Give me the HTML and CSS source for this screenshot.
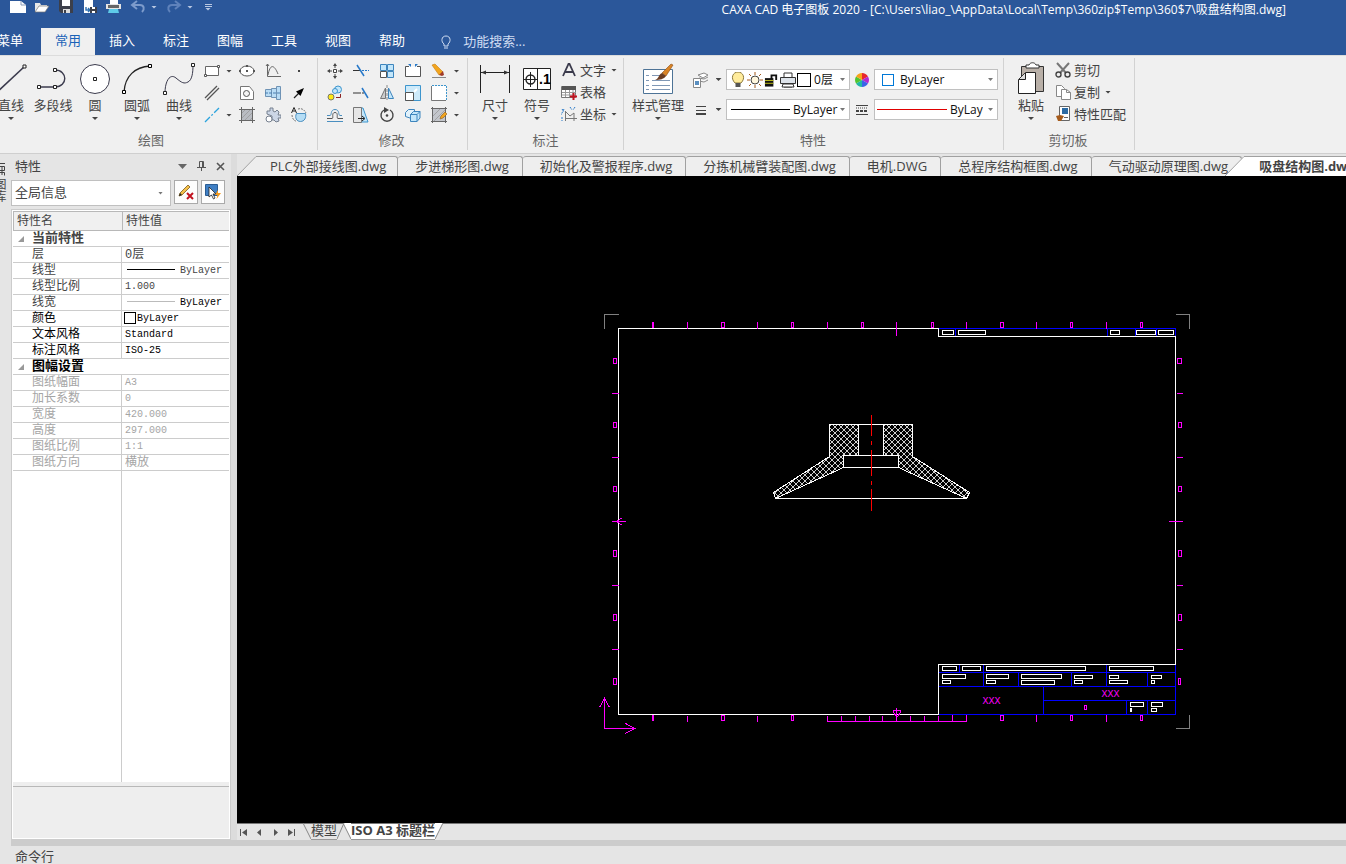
FILE: index.html
```html
<!DOCTYPE html>
<html lang="zh-CN">
<head>
  <meta charset="UTF-8" />
  <title>CAXA CAD 电子图板 2020</title>
  <meta name="viewport" content="width=device-width, initial-scale=1.0" />
  <link rel="stylesheet" href="styles.css">
</head>
<body>

  <header class="titlebar">
    <div class="title-row">
      <div class="quick">
        <button aria-label="新建"><svg class="ico" viewBox="0 0 16 16"><path d="M0 2h11l5 4v8H0z" fill="#fff"/><path d="M11 2v4h5" fill="none" stroke="#8a9bb8"/></svg></button>
        <button aria-label="打开"><svg class="ico" viewBox="0 0 16 16"><path d="M1 13V4h5l1 2h6v2" fill="#e8e8e8"/><path d="M1 13l4-6h10l-4 6z" fill="#fff" stroke="#777" stroke-width=".7"/></svg></button>
        <button aria-label="保存"><svg class="ico" viewBox="0 0 16 16"><path d="M1 1h14v13H3l-2-2z" fill="#3c3f4a"/><path d="M4 1h8v6H4z" fill="#fff"/><path d="M5 10h7v4H5z" fill="#ddd"/><path d="M6 11h2v3H6z" fill="#3c3f4a"/></svg></button>
        <button aria-label="另存为"><svg class="ico" viewBox="0 0 16 16"><path d="M2 0h9v14H2z" fill="#fff"/><path d="M4 8v3h4M6 9l2 2-2 2" fill="none" stroke="#2e6fb0" stroke-width="1.4"/><path d="M8 8h7v6H8z" fill="#3c3f4a"/><path d="M10 8h3v2h-3zM10 12h3v2h-3z" fill="#fff"/></svg></button>
        <button aria-label="打印"><svg class="ico" viewBox="0 0 16 16"><path d="M4 0h8v5H4z" fill="#fff"/><path d="M0 5h15v5H0z" fill="#e4e4e4"/><path d="M2 6h11v3H2z" fill="#666"/><path d="M3 10h9l1 4H2z" fill="#5fcbe8"/></svg></button>
        <button aria-label="撤销"><svg class="ico" viewBox="0 0 16 16"><path d="M7 2L2 6l5 4M3 6h7c4 0 5 4 2 7" fill="none" stroke="#7d9bcb" stroke-width="2"/></svg></button>
        <button class="mini" aria-label="撤销列表"><span class="arrow light"></span></button>
        <button aria-label="重做"><svg class="ico" viewBox="0 0 16 16"><path d="M9 2l5 4-5 4M13 6H6c-4 0-5 4-2 7" fill="none" stroke="#5f82bb" stroke-width="2"/></svg></button>
        <button class="mini" aria-label="重做列表"><span class="arrow light"></span></button>
        <button class="mini more" aria-label="自定义"><span class="bar"></span><span class="bar"></span><span class="arrow light"></span></button>
      </div>
      <h1>CAXA CAD 电子图板 2020 - [C:\Users\liao_\AppData\Local\Temp\360zip$Temp\360$7\吸盘结构图.dwg]</h1>
    </div>
    <nav class="menu">
      <a class="menu-main" href="#">菜单</a>
      <a class="active" href="#">常用</a>
      <a href="#">插入</a>
      <a href="#">标注</a>
      <a href="#">图幅</a>
      <a href="#">工具</a>
      <a href="#">视图</a>
      <a href="#">帮助</a>
      <label class="search">
        <svg width="12" height="14" viewBox="0 0 12 14"><path d="M4 9C1 7 1 1 6 1s5 6 2 8v2H4zM4 13h4" fill="none" stroke="#cfdcf2"/></svg>
        <input type="text" placeholder="功能搜索..." aria-label="功能搜索">
      </label>
    </nav>
  </header>

  <div class="ribbon">
    <section class="group draw">
      <div class="group-body">
        <button class="big"><svg viewBox="0 0 36 36"><path d="M3 32L31 6" stroke="#3b3b4d" stroke-width="1.6"/><path d="M30 4h3v3h-3z" fill="#fff" stroke="#222"/></svg><span>直线</span><span class="arrow"></span></button>
        <button class="big"><svg viewBox="0 0 36 36" fill="none" stroke="#3b3b4d"><path d="M4 26h16c13 0 13-17 0-17" stroke-width="1.4"/><path d="M2.500 24.500h3v3h-3zM18.500 24.500h3v3h-3zM18.500 7.500h3v3h-3z" fill="#fff" stroke="#222"/></svg><span>多段线</span></button>
        <button class="big"><svg viewBox="0 0 36 36"><circle cx="18" cy="18" r="14.500" fill="#fff" stroke="#3b3b4d"/><path d="M16.500 16.500h3v3h-3z" fill="#fff" stroke="#222"/></svg><span>圆</span><span class="arrow"></span></button>
        <button class="big"><svg viewBox="0 0 36 36"><path d="M5 31C6 15 16 6 31 5" fill="none" stroke="#222" stroke-width="1.300"/><path d="M3.500 29.500h3v3h-3zM29.500 3.500h3v3h-3z" fill="#fff" stroke="#000"/></svg><span>圆弧</span><span class="arrow"></span></button>
        <button class="big"><svg viewBox="0 0 36 36"><path d="M4 32C4 20 9 12 15 17s8 6 12 4 5-9 5-17" fill="none" stroke="#3b3b4d"/><path d="M2.500 30.500h3v3h-3zM30.500 2.500h3v3h-3z" fill="#fff" stroke="#222"/></svg><span>曲线</span><span class="arrow"></span></button>
        <div class="small-grid draw-grid">
          <button aria-label="矩形"><svg class="ico" viewBox="0 0 16 16"><path d="M1.500 3.500h13v9h-13z" fill="#fff" stroke="#666"/><path d="M.5 11.500h2v2h-2zM13.500 2.500h2v2h-2z" fill="#fff" stroke="#555"/></svg></button>
          <button aria-label="矩形选项"><span class="arrow"></span></button>
          <button aria-label="椭圆"><svg class="ico" viewBox="0 0 16 16"><ellipse cx="8" cy="8" rx="7" ry="5" fill="#fff" stroke="#555"/><path d="M7 2h2v2H7zM0 7h2v2H0zM14 7h2v2h-2zM7 7h2v2H7z" fill="#555"/></svg></button>
          <button aria-label="公式曲线"><svg class="ico" viewBox="0 0 16 16"><path d="M2.500 1v12.500H16M3 12C5 1 9 1 13 11" fill="none" stroke="#666"/><path d="M1 3l1.500-2L4 3" fill="none" stroke="#666"/></svg></button>
          <button aria-label="点"><svg class="ico" viewBox="0 0 16 16"><path d="M7 7h2v2H7z" fill="#444"/></svg></button>

          <button aria-label="平行线"><svg class="ico" viewBox="0 0 16 16"><path d="M1 13L13 1M3 15L15 3" stroke="#555" stroke-width="1.300"/></svg></button>
          <span></span>
          <button aria-label="局部放大"><svg class="ico" viewBox="0 0 16 16"><path d="M1.500 1.500h9l4 5v8h-13z" fill="#fff" stroke="#777"/><circle cx="7.500" cy="8.500" r="3" fill="#f4f4f4" stroke="#555"/></svg></button>
          <button aria-label="孔轴"><svg class="ico" viewBox="0 0 16 16"><path d="M.5 4.500h6v7h-6zM6.500 3.500h5v9h-5zM11.500 1.500h4v13h-4z" fill="#b9dcf5" stroke="#6f93b5"/><path d="M0 8h16" stroke="#4a7fb0" stroke-dasharray="3 1"/></svg></button>
          <button aria-label="箭头"><svg class="ico" viewBox="0 0 16 16"><path d="M3 13l6-6" stroke="#222" stroke-width="1.200"/><path d="M13 3l-8 3.500 4.500 4.500z" fill="#000"/></svg></button>

          <button aria-label="中心线"><svg class="ico" viewBox="0 0 16 16"><path d="M1 15L15 1" stroke="#2ba3dd" stroke-width="1.300" stroke-dasharray="7 2 2 2"/></svg></button>
          <button aria-label="中心线选项"><span class="arrow"></span></button>
          <button aria-label="剖面线"><svg class="ico" viewBox="0 0 16 16"><path d="M2 2h12v12H2z" fill="#b9bcc2"/><path d="M2 7l5-5M2 12L12 2M5 14l9-9M10 14l4-4" stroke="#999" stroke-width=".8"/><path d="M2.500 0v16M13.500 0v16M0 2.500h16M0 13.500h16" stroke="#666"/></svg></button>
          <button aria-label="齿形"><svg class="ico" viewBox="0 0 16 16"><path d="M5 1h3v3l2 1 2-2 2 2-1 3h3v3h-3l1 3-3 1-2-2H7V9L2 7V4h3z" fill="#ccd6e6" stroke="#76808f"/><circle cx="4" cy="12" r="3" fill="#fff" stroke="#76808f"/></svg></button>
          <button aria-label="圆弧拟合"><svg class="ico" viewBox="0 0 16 16"><path d="M5.500 6.500h9c1 4-1 8-5 8s-6-4-4-8z" fill="#b5ddf5" stroke="#4a8fc0"/><path d="M7 2c3-1 6 0 8 4M1 8c0 3 2 6 4 6" fill="none" stroke="#777" stroke-dasharray="2 1"/><path d="M.5 6L3 .500 5.500 6M1.500 4h3" fill="none" stroke="#222"/></svg></button>
        </div>
      </div>
      <h2>绘图</h2>
    </section>

    <section class="group modify">
      <div class="group-body">
        <div class="small-grid modify-grid">
          <button aria-label="平移"><svg class="ico" viewBox="0 0 16 16"><path d="M6.500 6.500h3v3h-3z" fill="#fff" stroke="#444"/><path d="M8 2v3M8 11v3M2 8h3M11 8h3" stroke="#444"/><path d="M6 3l2-3 2 3zM6 13l2 3 2-3zM3 6L0 8l3 2zM13 6l3 2-3 2z" fill="#444"/></svg></button>
          <button aria-label="裁剪"><svg class="ico" viewBox="0 0 16 16"><path d="M0 7.500h7" stroke="#333"/><path d="M9 7.500h7" stroke="#2778c8" stroke-dasharray="2 1"/><path d="M4 2l7 11" stroke="#2778c8" stroke-width="1.500"/></svg></button>
          <button aria-label="阵列"><svg class="ico" viewBox="0 0 16 16"><path d="M1.500 1.500h6v6h-6zM8.500 1.500h6v6h-6zM8.500 8.500h6v6h-6z" fill="#c3e6fa" stroke="#3d85bd"/><path d="M1.500 8.500h6v6h-6z" fill="#fff" stroke="#555"/></svg></button>
          <button aria-label="打断"><svg class="ico" viewBox="0 0 16 16"><path d="M4 3.500H.500v10h15v-10H12" fill="#fff" stroke="#555"/><path d="M3 1h3v3zM10 4V1h3z" fill="#2778c8"/></svg></button>
          <button aria-label="删除"><svg class="ico" viewBox="0 0 16 16"><path d="M1 2l3-1 8 8-4 3z" fill="#f2a51e" stroke="#c87d10" stroke-width=".6"/><path d="M8 12l4-4 1 4-2 1z" fill="#a03a28"/><path d="M1 14.500h14" stroke="#888"/></svg></button>
          <button aria-label="删除选项"><span class="arrow"></span></button>

          <button aria-label="平移复制"><svg class="ico" viewBox="0 0 16 16"><circle cx="11" cy="4.500" r="3.500" fill="#c3e6fa" stroke="#3d95cd"/><circle cx="8" cy="6" r="2.500" fill="#c3e6fa" stroke="#3d95cd"/><circle cx="4" cy="12" r="3" fill="#ffe914" stroke="#776"/><path d="M9 12.500h4.500V9" fill="none" stroke="#8a2323"/></svg></button>
          <button aria-label="延伸"><svg class="ico" viewBox="0 0 16 16"><path d="M0 8h6" stroke="#333"/><path d="M6 8h5" stroke="#333" stroke-dasharray="2 1"/><path d="M9 3l6 10" stroke="#2778c8" stroke-width="1.500"/></svg></button>
          <button aria-label="镜像"><svg class="ico" viewBox="0 0 16 16"><path d="M6.500 3v10.500h-5z" fill="#ccc" stroke="#777"/><path d="M9.500 3v10.500h5z" fill="#c3e6fa" stroke="#3d85bd"/><path d="M8 0v16" stroke="#888" stroke-dasharray="3 1"/></svg></button>
          <button aria-label="缩放"><svg class="ico" viewBox="0 0 16 16"><path d="M.5.500h15v15H.500z" fill="#cdeafa" stroke="#3d95cd"/><path d="M.5 7.500h8v8h-8z" fill="#fff" stroke="#555"/><path d="M9 7l3-3" stroke="#fff" stroke-width="2"/></svg></button>
          <button aria-label="拉伸"><svg class="ico" viewBox="0 0 16 16"><path d="M1 1h14v14H1z" fill="#fff"/><path d="M.5 1v14.500H15" fill="none" stroke="#777"/><path d="M1 .500h14.500V15" fill="none" stroke="#3d95cd" stroke-dasharray="2 1"/></svg></button>
          <button aria-label="拉伸选项"><span class="arrow"></span></button>

          <button aria-label="等距线"><svg class="ico" viewBox="0 0 16 16"><path d="M0 11.500h5c2 0-1-6 3-6s1 6 3 6h5" fill="none" stroke="#555"/><path d="M0 14.500h16M0 8.500h3c2 0 0-6 5-6s3 6 5 6h2" fill="none" stroke="#4a8fc0"/></svg></button>
          <button aria-label="倒角"><svg class="ico" viewBox="0 0 16 16"><path d="M10 1l5 14H6V1z" fill="#c3e6fa" stroke="#3d95cd"/><path d="M.5.500h8v15h-8z" fill="#e6e6e6" stroke="#777"/><path d="M5 11.500h6M9 9l3 2.500L9 14" fill="none" stroke="#222"/></svg></button>
          <button aria-label="旋转"><svg class="ico" viewBox="0 0 16 16"><path d="M5 3a6 6 0 1 0 6 0" fill="none" stroke="#444" stroke-width="1.400"/><path d="M5 0l5 3-5 3z" fill="#444"/><circle cx="8" cy="8.500" r="1.300" fill="#444"/></svg></button>
          <button aria-label="阵列块"><svg class="ico" viewBox="0 0 16 16"><path d="M.5 5.500l3-3h6v6l-3 3-6-2z" fill="#e2f2fb" stroke="#3d85bd"/><path d="M5.500 7.500l3-3h6.500v6.500l-3 3.500H5.500z" fill="#c3e6fa" stroke="#3d85bd"/><path d="M5.500 7.500H12v7M12 7.500l3-3" fill="none" stroke="#3d85bd"/></svg></button>
          <button aria-label="编辑填充"><svg class="ico" viewBox="0 0 16 16"><path d="M2 2h12v12H2z" fill="#c3c6cc"/><path d="M2 9l7-7M3 14L14 3" stroke="#999" stroke-width=".8"/><path d="M1.500 0v16M14.500 0v16M0 1.500h16M0 14.500h16" stroke="#666"/><path d="M9 12l1-3 4-4 2 2-4 4z" fill="#f2a51e" stroke="#8d5a1a" stroke-width=".6"/></svg></button>
          <button aria-label="编辑选项"><span class="arrow"></span></button>
        </div>
      </div>
      <h2>修改</h2>
    </section>

    <section class="group annotate">
      <div class="group-body">
        <button class="big"><svg viewBox="0 0 36 36"><path d="M3.500 4v28M32.500 4v28M4 11.500h28" stroke="#222"/><path d="M4 11.500l5-2v4zM32 11.500l-5-2v4z" fill="#333"/></svg><span>尺寸</span><span class="arrow"></span></button>
        <button class="big"><svg viewBox="0 0 36 36"><path d="M4.500 7.500h27v21h-27z" fill="#fff" stroke="#222"/><path d="M18.500 8v21M5 18.500h13M11.500 11v15" stroke="#222"/><circle cx="11.500" cy="18.500" r="4.500" fill="none" stroke="#222" stroke-width="1.400"/><text x="20" y="23" class="sym">.1</text></svg><span>符号</span><span class="arrow"></span></button>
        <div class="lines">
          <button><svg class="ico" viewBox="0 0 16 16"><path d="M2 14L7.500 2h1L14 14M4 10h8" fill="none" stroke="#3b3b4d" stroke-width="1.800"/></svg>文字<span class="arrow"></span></button>
          <button><svg class="ico" viewBox="0 0 16 16"><path d="M.5 2.500h14v11H.500z" fill="#fff" stroke="#777"/><path d="M1 2h14v4H1z" fill="#555"/><path d="M1 8.500h14M1 11h14M4.500 6v7M8.500 6v7M12 6v7" stroke="#999"/><path d="M12.500 9v7M9 12.500h7" stroke="#c1121f" stroke-width="2"/></svg>表格</button>
          <button><svg class="ico" viewBox="0 0 16 16"><path d="M4.500 5v10M5 12.500h11M5 6l4 4 4-3M13 7v8" fill="none" stroke="#777"/><path d="M1 3l2 3M3 3L0 9M9 1l2 3M14 1l-2 3M1 11v4" stroke="#2778c8" stroke-dasharray="2 1"/></svg>坐标<span class="arrow"></span></button>
        </div>
      </div>
      <h2>标注</h2>
    </section>

    <section class="group props">
      <div class="group-body">
        <button class="big wide"><svg viewBox="0 0 36 36"><path d="M3.500 8.500h29v24h-29z" fill="#fff" stroke="#4d7396"/><path d="M6 14.500h3M6 19.500h3M6 24.500h3M6 28.500h3M12 14.500h8M12 19.500h18M12 24.500h18M12 28.500h18" stroke="#7f97b5"/><path d="M22 12l9-9 2 1-7 11z" fill="#d98425" stroke="#8a4a10" stroke-width=".6"/><path d="M22 12l4 3c-2 3-6 4-11 4 4-1 3-5 7-7z" fill="#6b3d22"/></svg><span>样式管理</span><span class="arrow"></span></button>
        <div class="prop-grid">
          <button class="pick" aria-label="图层"><svg class="ico" viewBox="0 0 16 16"><path d="M5 3l6-2 4 2-5 3zM6 6l5 1 4-2M6 9l5 1 4-2" fill="#fff" stroke="#888"/><path d="M.5 6.500h7v9h-7z" fill="#fff" stroke="#888"/><path d="M2 9h4v4H2z" fill="#5a8fc0"/></svg><span class="arrow"></span></button>
          <div class="combo">
            <svg class="ico" viewBox="0 0 16 16"><path d="M5 11C0 6 3 0 8 0s8 6 3 11z" fill="#ffec9c" stroke="#8d7a3c"/><path d="M5.500 11h5v4h-5z" fill="#555"/></svg>
            <svg class="ico" viewBox="0 0 16 16"><circle cx="8" cy="8" r="4" fill="#fff7de" stroke="#444"/><path d="M8 0v3M8 13v3M0 8h3M13 8h3M2 2l2 2M12 12l2 2M2 14l2-2M12 4l2-2" stroke="#a55b1c"/></svg>
            <svg class="ico tight" viewBox="0 0 16 16"><path d="M1 6h9v9H1z" fill="#111"/><path d="M1 8.500h9M1 11.500h9" stroke="#c9c71e"/><path d="M8 7V3h5v5" fill="none" stroke="#111" stroke-width="2"/></svg>
            <svg class="ico" viewBox="0 0 16 16"><path d="M4 1h8v5H4zM4 10h8v5H4z" fill="#fff" stroke="#333"/><path d="M.5 5.500h15v6H.500z" fill="#dde3ea" stroke="#333"/><path d="M3 12l-1 3h12l-1-3z" fill="#fff" stroke="#333"/></svg>
            <span class="swatch black"></span>
            <select aria-label="图层选择"><option>0层</option></select>
          </div>
          <svg class="ico" viewBox="0 0 16 16"><path d="M8 8V1a7 7 0 0 1 6 3.500z" fill="#e8262c"/><path d="M8 8l6-3.500a7 7 0 0 1 0 7z" fill="#b12bd0"/><path d="M8 8l6 3.500A7 7 0 0 1 8 15z" fill="#3a64e8"/><path d="M8 8v7a7 7 0 0 1-6-3.500z" fill="#21b8a5"/><path d="M8 8l-6 3.500a7 7 0 0 1 0-7z" fill="#52c431"/><path d="M8 8L2 4.500A7 7 0 0 1 8 1z" fill="#f7a21b"/></svg>
          <div class="combo">
            <span class="swatch blue"></span>
            <select aria-label="颜色"><option>ByLayer</option></select>
          </div>

          <button class="pick" aria-label="线宽"><svg class="ico" viewBox="0 0 16 16"><path d="M3 4.500h10M3 8.500h10" stroke="#444"/><path d="M3 12h10" stroke="#444" stroke-width="2"/></svg><span class="arrow"></span></button>
          <div class="combo">
            <span class="sample"></span>
            <select aria-label="线型"><option>ByLayer</option></select>
          </div>
          <svg class="ico" viewBox="0 0 16 16"><path d="M2 3.500h12M2 12.500h12" stroke="#444"/><path d="M2 6h12" stroke="#444" stroke-dasharray="1 1"/><path d="M2 9h12" stroke="#444" stroke-width="2" stroke-dasharray="3 1"/></svg>
          <div class="combo">
            <span class="sample red"></span>
            <select class="cut" aria-label="线宽选择"><option>ByLayer</option></select>
          </div>
        </div>
      </div>
      <h2>特性</h2>
    </section>

    <section class="group clip">
      <div class="group-body">
        <button class="big"><svg viewBox="0 0 36 36"><path d="M8.500 5.500h22v25h-22z" fill="#b9b0a8" stroke="#333"/><path d="M13 7V4h3c1-3 6-3 7 0h3v3z" fill="#fff" stroke="#333"/><path d="M12.500 11.500h10v21h-17v-14z" fill="#fff" stroke="#222"/><path d="M12.500 12v6.500H6" fill="#ddd" stroke="#222"/></svg><span>粘贴</span><span class="arrow"></span></button>
        <div class="lines">
          <button><svg class="ico" viewBox="0 0 16 16"><path d="M2 1l9 10M14 1L5 11" stroke="#777" stroke-width="2"/><circle cx="3.500" cy="12.500" r="2.500" fill="none" stroke="#444" stroke-width="1.400"/><circle cx="12.500" cy="12.500" r="2.500" fill="none" stroke="#444" stroke-width="1.400"/></svg>剪切</button>
          <button><svg class="ico" viewBox="0 0 16 16"><path d="M1.500 1.500h5l3 3v8h-8z" fill="#fff" stroke="#888"/><path d="M6.500 5.500h5l4 3v7h-9z" fill="#fff" stroke="#888"/><path d="M11.500 5.500v3h4" fill="none" stroke="#888"/></svg>复制<span class="arrow"></span></button>
          <button><svg class="ico" viewBox="0 0 16 16"><path d="M4.500.500h10v14h-10z" fill="#fff" stroke="#666"/><path d="M7 2h6v6H7z" fill="#2d6ca5"/><path d="M9 11.500h4" stroke="#666"/><path d="M1 10l4-1 4 1-3 5H3z" fill="#a55b1c"/></svg>特性匹配</button>
        </div>
      </div>
      <h2>剪切板</h2>
    </section>
  </div>

  <main class="workspace">
    <aside class="dock">
      <svg width="5" height="14" viewBox="0 0 5 14"><path d="M0 1.500h5M0 4.500h4.500v4H0M0 10.500h4.500v3M2 5v8" fill="none" stroke="#444"/></svg>
      <span>图库</span>
    </aside>

    <section class="panel">
      <div class="panel-head">
        <h2>特性</h2>
        <button aria-label="选项"><svg width="9" height="5"><path d="M0 0h9L4.500 5z" fill="#666"/></svg></button>
        <button aria-label="固定"><svg width="9" height="10" viewBox="0 0 9 10"><path d="M2.500 6V.500h4V6M0 6.500h9M4.500 7v3M5.500 1v5" fill="none" stroke="#555"/></svg></button>
        <button aria-label="关闭"><svg width="9" height="9" viewBox="0 0 9 9"><path d="M1 1l7 7M8 1L1 8" stroke="#555" stroke-width="1.600"/></svg></button>
      </div>
      <div class="panel-tools">
        <div class="combo">
          <select aria-label="选择对象"><option>全局信息</option></select>
        </div>
        <button aria-label="清除选择"><svg class="ico" viewBox="0 0 16 16"><path d="M1 12l1-3 8-8 2 2-8 8z" fill="#f5c04a" stroke="#7a5a1a" stroke-width=".8"/><path d="M1 12l1-3 2 2z" fill="#222"/><path d="M9 9l6 6M15 9l-6 6" stroke="#c1121f" stroke-width="2"/></svg></button>
        <button aria-label="快速选择"><svg class="ico" viewBox="0 0 16 16"><path d="M.5.500h12v11H.500z" fill="#3f7fc4" stroke="#2a5c93"/><path d="M4 3v10l2.500-2 2 4 1.500-1-2-4h3z" fill="#fff" stroke="#222" stroke-width=".8"/><path d="M13 6l-3 5h2.500l-1 4 4.500-6h-3z" fill="#f59a1b"/></svg></button>
      </div>
      <div class="sheet">
        <table>
          <thead>
            <tr><th>特性名</th><th>特性值</th></tr>
          </thead>
          <tbody>
            <tr class="cat"><th colspan="2">当前特性</th></tr>
            <tr><td>层</td><td class="zh">0层</td></tr>
            <tr><td>线型</td><td><span class="line"></span>ByLayer</td></tr>
            <tr><td>线型比例</td><td>1.000</td></tr>
            <tr><td>线宽</td><td class="dark"><span class="line thin"></span>ByLayer</td></tr>
            <tr class="dark"><td>颜色</td><td class="flush"><span class="box"></span>ByLayer</td></tr>
            <tr class="dark"><td>文本风格</td><td>Standard</td></tr>
            <tr class="dark"><td>标注风格</td><td>ISO-25</td></tr>
            <tr class="cat dark"><th colspan="2">图幅设置</th></tr>
            <tr class="off"><td>图纸幅面</td><td>A3</td></tr>
            <tr class="off"><td>加长系数</td><td>0</td></tr>
            <tr class="off"><td>宽度</td><td>420.000</td></tr>
            <tr class="off"><td>高度</td><td>297.000</td></tr>
            <tr class="off"><td>图纸比例</td><td>1:1</td></tr>
            <tr class="off"><td>图纸方向</td><td class="zh">横放</td></tr>
          </tbody>
        </table>
        <div class="blank"></div>
        <div class="hint"></div>
      </div>
    </section>

    <section class="document">
      <nav class="doc-tabs">
        <svg class="slope" width="20" height="20" viewBox="0 0 20 20"><path d="M0 20L19 0h1v20z" fill="#eee"/><path d="M0 20L19 .500h1" fill="none" stroke="#a0a0a0"/></svg>
        <a class="first" href="#">PLC外部接线图.dwg</a>
        <a href="#">步进梯形图.dwg</a>
        <a href="#">初始化及警报程序.dwg</a>
        <a href="#">分拣机械臂装配图.dwg</a>
        <a href="#">电机.DWG</a>
        <a href="#">总程序结构框图.dwg</a>
        <a href="#">气动驱动原理图.dwg</a>
        <svg class="slope over" width="20" height="20" viewBox="0 0 20 20"><path d="M0 20L19 0h1v20z" fill="#fff"/><path d="M0 20L19 .500h1" fill="none" stroke="#a0a0a0"/></svg>
        <a class="active" href="#">吸盘结构图.dwg</a>
      </nav>

      <div class="canvas">
        <!-- viewBox is shifted half a unit so whole numbers land on pixel centres -->
        <svg viewBox="236.500 175.500 1109 647" preserveAspectRatio="xMinYMin meet" shape-rendering="crispEdges" fill="none">
          <defs>
            <pattern id="hatch" x=".5" y=".5" width="6" height="6" patternUnits="userSpaceOnUse">
              <path d="M-1 -1L7 7M-1 7L7 -1" stroke="#fff" stroke-width=".8"/>
            </pattern>
          </defs>

          <!-- sheet corners -->
          <path d="M604 328V314H618M1175 314H1189V328M1189 714V728H1175" stroke="#808080"/>

          <!-- title block grid -->
          <g stroke="#00f">
            <path d="M938 328H1175V336M955 328V336M1107 328V336M1135 328V336M1156 328V336"/>
            <path d="M938 672H1175M938 686H1175M1043 700H1175M938 714H1175V664"/>
            <path d="M959 664V672M983 664V686M1106 664V686M1018 672V686M1071 672V686M1147 672V686M1147 700V714M1126 700V714M1043 686V714"/>
          </g>

          <!-- frame -->
          <path d="M618 328H938V336H1175V664H938V714H618z" stroke="#fff"/>

          <!-- zone marks -->
          <g stroke="#f0f">
            <path d="M687 321V328M757 321V328M827 321V328M896 321V335M966 321V328M1036 321V328M1106 321V328"/>
            <path d="M687 715V721M757 715V721M1036 714V721M1106 714V721"/>
            <path d="M827 715V721H966V714M841 715V721M855 715V721M869 715V721M882 715V721M896 707V721M910 715V721M924 715V721M938 715V721M952 714V721"/>
            <path d="M611 393H618M611 457H618M611 521H625M611 585H618M611 649H618"/>
            <path d="M1176 393H1182M1176 457H1182M1168 521H1182M1176 585H1182M1176 649H1182"/>
            <path d="M652 322h1v5h-1zM721 322h3v5h-3zM791 322h2v5h-2zM861 322h2v5h-2zM931 322h2v5h-2zM1000 322h3v5h-3zM1070 322h2v5h-2zM1140 322h2v5h-2z"/>
            <path d="M652 715h1v5h-1zM721 715h3v5h-3zM791 715h2v5h-2zM1000 715h3v5h-3zM1070 715h2v5h-2zM1140 715h2v5h-2z"/>
            <path d="M613 358h3v5h-3zM613 422h3v5h-3zM613 486h3v5h-3zM613 550h3v6h-3zM613 614h3v6h-3zM613 678h3v6h-3z"/>
            <path d="M1177 358h4v5h-4zM1178 422h3v5h-3zM1178 486h3v5h-3zM1178 550h3v6h-3zM1178 614h3v6h-3zM1178 678h2v6h-2z"/>
            <path d="M893 712V710H900V712L897 716H896L893 712M622 517L616 521L622 525"/>
            <path d="M1084 705h2v4h-2z"/>
            <!-- origin -->
            <path d="M604 698V728H634M599 707L604 698L609 707M625 723L634 728L625 733"/>
          </g>

          <!-- text placeholders -->
          <g stroke="#fff">
            <path d="M942 330h11v4h-11zM958 330h27v4h-27zM1110 330h9v4h-9zM1136 330h19v4h-19zM1158 330h15v4h-15z"/>
            <path d="M942 666h14v4h-14zM962 666h18v4h-18zM986 666h99v4h-99zM1109 666h44v4h-44z"/>
            <path d="M942 674h23v4h-23zM986 674h22v4h-22zM1021 674h40v4h-40zM1074 675h18v3h-18zM1109 675h9v3h-9zM1151 675h10v3h-10z"/>
            <path d="M942 680h8v3h-8zM986 680h9v3h-9zM1021 680h33v4h-33zM1074 680h8v3h-8zM1109 680h18v3h-18zM1151 680h3v3h-3z"/>
            <path d="M1130 702h13v4h-13zM1151 702h11v4h-11zM1130 708h1v3h-1zM1151 708h5v3h-5z"/>
          </g>
          <text x="982" y="703" class="mark">XXX</text>
          <text x="1101" y="696" class="mark">XXX</text>

          <!-- suction cup section -->
          <g stroke="#fff">
            <path d="M829 424H858V455H843V467L775 498L773 492L829 456z" fill="url(#hatch)"/>
            <path d="M912 424H883V455H898V467L966 498L969 492L912 456z" fill="url(#hatch)"/>
            <path d="M858 424H883M843 455H898M843 467H898M775 498H966"/>
          </g>
          <path d="M871 414V435M871 440V444M871 449V475M871 480V484M871 488V510" stroke="#f00"/>
        </svg>
      </div>

      <nav class="sheet-tabs">
        <button aria-label="第一个"><svg width="9" height="9"><path d="M1 1h1v7H1zM8 1v7L3 4.500z" fill="#555"/></svg></button>
        <button aria-label="上一个"><svg width="9" height="9"><path d="M6 1v7L2 4.500z" fill="#555"/></svg></button>
        <button aria-label="下一个"><svg width="9" height="9"><path d="M3 1v7l4-3.500z" fill="#555"/></svg></button>
        <button aria-label="最后一个"><svg width="9" height="9"><path d="M1 1v7l5-3.500zM7 1h1v7H7z" fill="#555"/></svg></button>
        <svg class="wing" width="8" height="16"><path d="M0 0l8 16" stroke="#888"/></svg>
        <a href="#">模型</a>
        <svg class="wing" width="14" height="16"><path d="M6 0h8v16z" fill="#fff"/><path d="M0 16L7 0M6 0l8 16" stroke="#888" fill="none"/></svg>
        <a class="active" href="#">ISO A3 标题栏</a>
        <svg class="wing" width="8" height="16"><path d="M0 0h8L0 16z" fill="#fff"/><path d="M0 16L8 0" stroke="#888"/></svg>
      </nav>
    </section>
  </main>

  <footer class="command">命令行</footer>

</body>
</html>
```

FILE: styles.css
```css
* {
  box-sizing: border-box;
}

body {
  margin: 0;
  height: 100vh;
  display: flex;
  flex-direction: column;
  overflow: hidden;
  background: #e5e5e5;
  color: #444;
  font-family: "Open Sans", "Noto Sans CJK SC", sans-serif;
  font-size: 13px;
}

h1, h2 {
  margin: 0;
  font-weight: 400;
}

a {
  color: inherit;
  text-decoration: none;
}

button {
  display: flex;
  align-items: center;
  justify-content: center;
  margin: 0;
  padding: 0;
  border: none;
  background: none;
  color: inherit;
  font: inherit;
}

svg {
  display: block;
  flex: none;
}

.ico {
  width: 16px;
  height: 16px;
}

.arrow {
  flex: none;
  width: 6px;
  height: 3px;
  background: #444;
  clip-path: polygon(0 0, 100% 0, 50% 100%);
}

.arrow.light {
  background: #b9c8e2;
}

/* title bar */
.titlebar {
  flex: none;
  background: #2b579a;
  color: #fff;
}

.title-row {
  display: flex;
  align-items: flex-start;
  justify-content: space-between;
  height: 28px;
  padding: 0 60px 0 10px;
}

.title-row h1 {
  font-size: 12px;
  line-height: 20px;
  white-space: nowrap;
}

.quick {
  display: flex;
  gap: 8px;
  height: 14px;
}

.quick .mini {
  width: 8px;
  margin-left: -4px;
}

.quick .more {
  flex-direction: column;
  gap: 1px;
  margin-left: 2px;
}

.bar {
  width: 7px;
  height: 1px;
  background: #b9c8e2;
}

.menu {
  display: flex;
  height: 27px;
  margin-left: -3px;
}

.menu a {
  padding: 0 14px;
  line-height: 25px;
}

.menu .menu-main {
  padding: 0 18px 0 0;
}

.menu .active {
  background: #f0f0f0;
  color: #1a63b8;
}

.search {
  display: flex;
  align-items: center;
  gap: 11px;
  margin-left: 21px;
}

.search input {
  width: 120px;
  padding: 0 0 2px;
  border: none;
  outline: none;
  background: none;
  color: #fff;
  font: inherit;
}

.search input::placeholder {
  color: #cfdcf2;
}

/* ribbon */
.ribbon {
  flex: none;
  display: flex;
  padding: 2px 0 3px;
  border-top: 1px solid #dcdcdc;
  border-bottom: 1px solid #cfcfcf;
  background: #f0f0f0;
}

.group {
  padding: 2px 6px 0;
  border-right: 1px solid #d2d2d2;
}

.group-body {
  display: flex;
  height: 70px;
}

.group h2 {
  color: #666;
  font-size: 13px;
  line-height: 20px;
  text-align: center;
}

.group.draw {
  padding: 2px 5px 0 0;
}

.draw .group-body,
.draw h2 {
  margin-left: -10px;
}

.group.modify {
  padding-left: 4px;
}

.group.props {
  padding: 2px 5px 0 4px;
}

.group.clip {
  padding-right: 8px;
}

.big {
  flex-direction: column;
  justify-content: flex-start;
  width: 42px;
  line-height: 14px;
  white-space: nowrap;
}

.big svg {
  width: 36px;
  height: 38px;
}

.big .arrow {
  margin-top: 5px;
}

.big.wide {
  width: 60px;
}

.sym {
  fill: #000;
  font: bold 14px "Liberation Sans", sans-serif;
}

.small-grid {
  display: grid;
  grid-auto-rows: 22px;
}

.draw-grid {
  grid-template-columns: 24px 10px 26px 26px 26px;
}

.modify-grid {
  grid-template-columns: repeat(5, 26px) 9px;
}

.lines {
  display: grid;
  grid-auto-rows: 22px;
  margin-left: 3px;
}

.lines button {
  justify-content: flex-start;
  gap: 3px;
  padding-bottom: 2px;
  line-height: 20px;
}

.lines .arrow {
  margin-left: 2px;
}

.prop-grid {
  display: grid;
  grid-template-columns: 38px 124px 24px 124px;
  grid-auto-rows: 21px;
  row-gap: 9px;
  padding-top: 9px;
  align-items: center;
  justify-items: center;
}

.pick {
  gap: 7px;
}

/* drop-downs */
.combo {
  display: flex;
  align-items: center;
  width: 100%;
  height: 21px;
  padding: 0 4px 0 3px;
  border: 1px solid #c0c0c0;
  background: #fff;
  color: #111;
  font-size: 12px;
}

.combo::after {
  content: "";
  flex: none;
  width: 5px;
  height: 3px;
  background: #777;
  clip-path: polygon(0 0, 100% 0, 50% 100%);
}

.combo select {
  flex: 1;
  min-width: 0;
  margin: 0;
  padding: 0;
  border: none;
  outline: none;
  appearance: none;
  background: none;
  color: inherit;
  font: inherit;
}

.combo .tight {
  width: 15px;
}

.combo .ico + .ico {
  margin-left: 1px;
}

.swatch {
  flex: none;
  width: 14px;
  height: 14px;
  margin-right: 3px;
  border: 1px solid #000;
}

.swatch.black {
  margin-left: 1px;
}

.swatch.blue {
  width: 12px;
  height: 12px;
  margin: 0 6px 0 4px;
  border-color: #0078d7;
}

.sample {
  flex: none;
  width: 59px;
  height: 1px;
  margin: 0 3px 0 1px;
  background: #000;
}

.sample.red {
  width: 70px;
  margin-left: -1px;
  background: #e00000;
}

.combo .cut {
  margin-right: 5px;
}

/* workspace */
.workspace {
  flex: 1;
  display: flex;
  min-height: 0;
}

.dock {
  flex: none;
  display: flex;
  flex-direction: column;
  align-items: flex-start;
  gap: 2px;
  width: 11px;
  padding-top: 8px;
  overflow: hidden;
  font-size: 12px;
}

.dock span {
  margin-left: -8px;
  line-height: 14px;
  writing-mode: vertical-rl;
}

.panel {
  flex: none;
  display: flex;
  flex-direction: column;
  width: 220px;
}

.panel-head {
  display: flex;
  align-items: center;
  gap: 10px;
  height: 26px;
  padding: 0 6px 2px 4px;
}

.panel-head h2 {
  flex: 1;
  padding-bottom: 2px;
  font-size: 13px;
}

.panel-tools {
  display: flex;
  gap: 3px;
  padding-right: 6px;
}

.panel-tools .combo {
  height: 26px;
  padding-right: 7px;
  color: #444;
  font-size: 13px;
}

.panel-tools select {
  padding-bottom: 2px;
}

.panel-tools button {
  flex: none;
  width: 24px;
  height: 24px;
  border: 1px solid #aaa;
  background: #fdfdfd;
}

.sheet {
  flex: 1;
  display: flex;
  flex-direction: column;
  margin-top: 3px;
  padding: 1px;
  border: 1px solid #ccc;
  background: #fff;
  color: #444;
  font-family: "Liberation Mono", "Noto Sans CJK SC", monospace;
  font-size: 12px;
}

.sheet table {
  width: 100%;
  border-spacing: 0;
  table-layout: fixed;
}

.sheet th,
.sheet td {
  height: 16px;
  padding: 2px 0 0 19px;
  border-bottom: 1px solid #ccc;
  line-height: 13px;
  text-align: left;
  white-space: nowrap;
}

.sheet td:first-child {
  border-right: 1px solid #ccc;
}

.sheet td + td {
  padding: 0 0 0 3px;
  font-size: 10px;
  line-height: 15px;
}

.sheet td.zh {
  padding-top: 2px;
  font-size: 12px;
  line-height: 13px;
}

.sheet thead th {
  height: 20px;
  padding-top: 3px;
  padding-left: 3px;
  border-top: 1px solid #b8b8b8;
  border-left: 1px solid #b8b8b8;
  border-bottom-color: #b8b8b8;
  background: #f0f0f0;
  font-weight: 400;
}

.sheet thead th:first-child {
  width: 109px;
}

.sheet .cat th {
  padding-top: 0;
  font-size: 13px;
  line-height: 15px;
}

.cat th::before {
  content: "";
  display: inline-block;
  width: 6px;
  height: 6px;
  margin: 0 8px 0 -14px;
  background: #999;
  clip-path: polygon(100% 0, 100% 100%, 0 100%);
}

.dark {
  color: #000;
}

.off {
  color: #a5a5a5;
}

.line {
  display: inline-block;
  width: 48px;
  height: 1px;
  margin: 0 5px 0 2px;
  background: #000;
  vertical-align: 3px;
}

.line.thin {
  background: #bbb;
}

.sheet td.flush {
  padding-left: 2px;
}

.box {
  display: inline-block;
  width: 12px;
  height: 12px;
  margin-right: 1px;
  border: 1px solid #000;
  vertical-align: -3px;
}

.blank {
  flex: 1;
  width: 109px;
  border-right: 1px solid #ccc;
}

.hint {
  height: 56px;
  border-top: 4px solid #eee;
  background: #eee;
  box-shadow: inset 0 1px #b8b8b8;
}

/* document area */
.document {
  flex: 1;
  display: flex;
  flex-direction: column;
  min-width: 0;
  border-left: 6px solid #dcdcdc;
}

.doc-tabs {
  flex: none;
  display: flex;
  height: 22px;
  padding-top: 2px;
  overflow: hidden;
}

.doc-tabs a {
  flex: none;
  padding: 0 13px 0 17px;
  border-top: 1px solid #a0a0a0;
  border-right: 1px solid #a0a0a0;
  border-radius: 3px 3px 0 0;
  background: #eee;
  line-height: 18px;
}

.doc-tabs .first {
  padding: 0 11px 0 13px;
  border-radius: 0 3px 0 0;
}

.doc-tabs .over {
  position: relative;
  margin-left: -17px;
}

.doc-tabs .active {
  padding-left: 14px;
  border-radius: 0;
  background: #fff;
  font-weight: 700;
}

.canvas {
  flex: 1;
  min-height: 0;
  background: #000;
}

.canvas svg {
  width: 100%;
  height: 100%;
}

.mark {
  fill: #f0f;
  font: 10px "Liberation Mono", monospace;
}

.sheet-tabs {
  flex: none;
  display: flex;
  height: 17px;
  border-top: 1px solid #777;
}

.sheet-tabs button {
  width: 16px;
}

.sheet-tabs button:first-child {
  margin-left: -2px;
}

.sheet-tabs .wing {
  margin-top: -1px;
}

.sheet-tabs button + .wing {
  margin-left: 4px;
}

.sheet-tabs a {
  border-bottom: 1px solid #999;
  line-height: 13px;
}

.sheet-tabs .active {
  background: #fff;
  font-weight: 700;
}

.command {
  flex: none;
  height: 24px;
  margin-left: 11px;
  padding-left: 4px;
  border-top: 6px solid #ccc;
  line-height: 20px;
}
```
